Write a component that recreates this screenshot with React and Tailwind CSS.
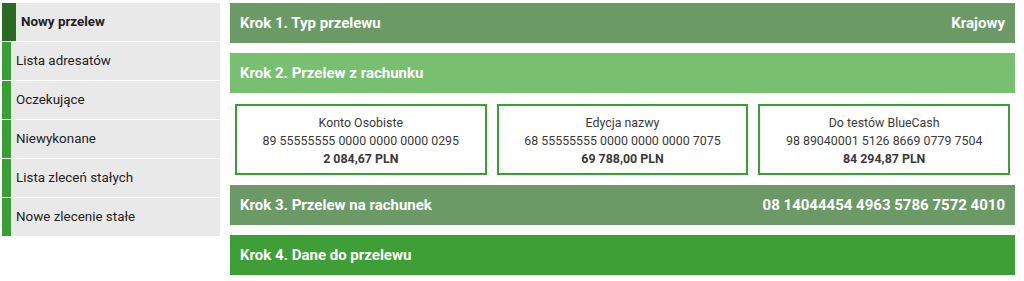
const menu = [
  { label: 'Nowy przelew', active: true },
  { label: 'Lista adresatów' },
  { label: 'Oczekujące' },
  { label: 'Niewykonane' },
  { label: 'Lista zleceń stałych' },
  { label: 'Nowe zlecenie stałe' },
]

const accounts = [
  { name: 'Konto Osobiste', number: '89 55555555 0000 0000 0000 0295', balance: '2 084,67 PLN' },
  { name: 'Edycja nazwy', number: '68 55555555 0000 0000 0000 7075', balance: '69 788,00 PLN' },
  { name: 'Do testów BlueCash', number: '98 89040001 5126 8669 0779 7504', balance: '84 294,87 PLN' },
]

function Step({ title, value, color }) {
  return (
    <div className={`h-10 flex items-center justify-between px-[10px] text-white font-bold text-[15px] ${color}`}>
      <span>{title}</span>
      {value && <span>{value}</span>}
    </div>
  )
}

export default function App() {
  return (
    <div className="flex gap-[10px] pt-[3px] pl-[2px] bg-white w-[1024px] h-[281px]" style={{ fontFamily: 'Roboto, "Liberation Sans", sans-serif' }}>
      {/* Sidebar */}
      <ul className="w-[218px] flex flex-col gap-px">
        {menu.map((m) => (
          <li key={m.label} className="h-[38px] flex bg-[#e9e9e9] text-[13.4px] text-[#222]">
            <span className={m.active ? 'w-[14px] bg-[#2b6a22]' : 'w-[9px] bg-[#3a9e36]'} />
            <span className={`flex items-center pl-[5px] ${m.active ? 'font-bold' : ''}`}>{m.label}</span>
          </li>
        ))}
      </ul>

      {/* Steps */}
      <div className="w-[785px] flex flex-col">
        <Step title="Krok 1. Typ przelewu" value="Krajowy" color="bg-[#6b9a66]" />
        <div className="mt-[10px]">
          <Step title="Krok 2. Przelew z rachunku" color="bg-[#78bf70]" />
        </div>
        <div className="grid grid-cols-3 gap-[10px] px-[5px] pt-[11px] pb-[10px]">
          {accounts.map((a) => (
            <div key={a.name} className="h-[71px] border-2 border-[#3a9f34] flex flex-col items-center justify-center pt-[2px] text-[12.4px] leading-[18px] text-[#3a3a3a]">
              <span>{a.name}</span>
              <span>{a.number}</span>
              <span className="font-bold">{a.balance}</span>
            </div>
          ))}
        </div>
        <Step title="Krok 3. Przelew na rachunek" value="08 14044454 4963 5786 7572 4010" color="bg-[#6b9a66]" />
        <div className="mt-[10px]">
          <Step title="Krok 4. Dane do przelewu" color="bg-[#3e9f36]" />
        </div>
      </div>
    </div>
  )
}
